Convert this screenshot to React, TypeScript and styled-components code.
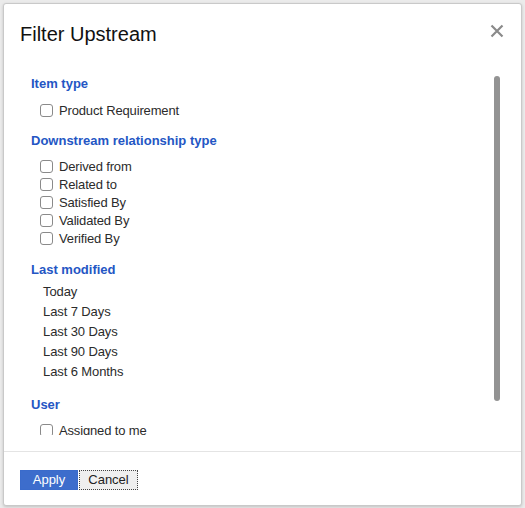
import React from "react";
import styled, { createGlobalStyle } from "styled-components";

const Global = createGlobalStyle`
  html, body { margin: 0; padding: 0; }
  body {
    background: #ebebeb;
    font-family: "Liberation Sans", Arial, sans-serif;
    overflow: hidden;
  }
`;

const Backdrop = styled.div`
  width: 525px;
  height: 508px;
  box-sizing: border-box;
  padding: 3px 0 0 3px;
  background: #ebebeb;
`;

const Modal = styled.div`
  width: 519px;
  height: 503px;
  box-sizing: border-box;
  background: #fff;
  border: 1px solid #c9c9c9;
  border-radius: 3px;
  box-shadow: 0 1px 3px rgba(0, 0, 0, 0.18);
  display: flex;
  flex-direction: column;
  position: relative;
`;

const Header = styled.div`
  display: flex;
  align-items: flex-start;
  justify-content: space-between;
  padding: 18px 17px 0 16px;
  height: 66px;
  box-sizing: border-box;
`;

const Title = styled.h1`
  margin: 0;
  font-family: "Liberation Sans", Arial, sans-serif;
  font-weight: 400;
  font-size: 20px;
  line-height: 24px;
  color: #111;
`;

const CloseButton = styled.button`
  border: 0;
  background: none;
  padding: 0;
  margin-top: 2px;
  width: 14px;
  height: 14px;
  display: flex;
  cursor: pointer;
`;

const Body = styled.div`
  position: relative;
  height: 365px;
  overflow: hidden;
  padding: 5px 0 0 27px;
  box-sizing: border-box;
`;

const Thumb = styled.div`
  position: absolute;
  right: 21px;
  top: 6px;
  width: 6px;
  height: 325px;
  border-radius: 3px;
  background: #939393;
`;

const Section = styled.section<{ $gap?: number }>`
  margin-top: ${(p) => p.$gap ?? 0}px;
`;

const Heading = styled.h2`
  margin: 0;
  font-family: "Liberation Sans", Arial, sans-serif;
  font-weight: 700;
  font-size: 13px;
  line-height: 18px;
  color: #2456c4;
`;

const List = styled.div<{ $top: number }>`
  display: flex;
  flex-direction: column;
  margin-top: ${(p) => p.$top}px;
  padding-left: 9px;
`;

const CheckRow = styled.label`
  display: flex;
  align-items: center;
  gap: 6px;
  height: 18px;
  font-size: 13px;
  letter-spacing: -0.15px;
  color: #2b2b2b;
`;

const Box = styled.span`
  width: 13px;
  height: 13px;
  box-sizing: border-box;
  border: 1px solid #8a8a8a;
  border-radius: 3px;
  background: #fff;
  flex: none;
`;

const DateRow = styled.div`
  height: 20px;
  line-height: 20px;
  padding-left: 3px;
  font-size: 13px;
  letter-spacing: -0.1px;
  color: #2b2b2b;
`;

const Footer = styled.div`
  border-top: 1px solid #e4e4e4;
  margin-top: 16px;
  padding: 18px 16px 0;
  display: flex;
`;

const Btn = styled.button<{ $primary?: boolean }>`
  height: 20px;
  width: ${(p) => (p.$primary ? 58 : 59)}px;
  padding: 0;
  margin: 0 ${(p) => (p.$primary ? 1 : 0)}px 0 0;
  font-family: "Liberation Sans", Arial, sans-serif;
  font-size: 13px;
  line-height: 18px;
  border: ${(p) => (p.$primary ? "1px solid #3a6bcb" : "1px dotted #444")};
  background: ${(p) => (p.$primary ? "#3d6dcc" : "#efefef")};
  color: ${(p) => (p.$primary ? "#fff" : "#222")};
  border-radius: 0;
  cursor: pointer;
`;

const Check = ({ label }: { label: string }) => (
  <CheckRow>
    <Box />
    {label}
  </CheckRow>
);

export default function App() {
  return (
    <>
      <Global />
      <Backdrop>
        <Modal>
          <Header>
            <Title>Filter Upstream</Title>
            <CloseButton aria-label="Close">
              <svg width="14" height="14" viewBox="0 0 14 14">
                <path d="M1.5 1.5 L12.5 12.5 M12.5 1.5 L1.5 12.5" stroke="#8a8a8a" strokeWidth="2.2" strokeLinecap="butt" />
              </svg>
            </CloseButton>
          </Header>
          <Body>
            <Thumb />
            <Section>
              <Heading>Item type</Heading>
              <List $top={8}>
                <Check label="Product Requirement" />
              </List>
            </Section>
            <Section $gap={13}>
              <Heading>Downstream relationship type</Heading>
              <List $top={7}>
                {["Derived from", "Related to", "Satisfied By", "Validated By", "Verified By"].map((l) => (
                  <Check key={l} label={l} />
                ))}
              </List>
            </Section>
            <Section $gap={14}>
              <Heading>Last modified</Heading>
              <List $top={3}>
                {["Today", "Last 7 Days", "Last 30 Days", "Last 90 Days", "Last 6 Months"].map((l) => (
                  <DateRow key={l}>{l}</DateRow>
                ))}
              </List>
            </Section>
            <Section $gap={14}>
              <Heading>User</Heading>
              <List $top={7}>
                <Check label="Assigned to me" />
              </List>
            </Section>
          </Body>
          <Footer>
            <Btn $primary>Apply</Btn>
            <Btn>Cancel</Btn>
          </Footer>
        </Modal>
      </Backdrop>
    </>
  );
}
